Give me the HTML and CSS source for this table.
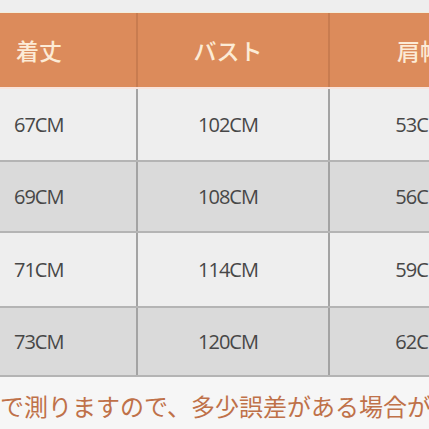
FILE: index.html
```html
<!DOCTYPE html>
<html lang="ja">
<head>
<meta charset="utf-8">
<title>サイズ表</title>
<link rel="stylesheet" href="styles.css">
</head>
<body>
<div class="page">
  <div class="topband"></div>
  <div class="table">
    <div class="row head">
      <div class="cell first">着丈</div>
      <div class="cell">バスト</div>
      <div class="cell">肩幅</div>
    </div>
    <div class="row light r1">
      <div class="cell first">67CM</div>
      <div class="cell">102CM</div>
      <div class="cell">53CM</div>
    </div>
    <div class="row dark r2">
      <div class="cell first">69CM</div>
      <div class="cell">108CM</div>
      <div class="cell">56CM</div>
    </div>
    <div class="row light r3">
      <div class="cell first">71CM</div>
      <div class="cell">114CM</div>
      <div class="cell">59CM</div>
    </div>
    <div class="row dark r4">
      <div class="cell first">73CM</div>
      <div class="cell">120CM</div>
      <div class="cell">62CM</div>
    </div>
  </div>
  <p class="note">で測りますので、多少誤差がある場合があります。</p>
</div>
</body>
</html>
```
FILE: styles.css
```css
html, body {
  margin: 0;
  padding: 0;
  width: 429px;
  height: 429px;
  overflow: hidden;
  background: #f6f6f6;
}
.page {
  width: 429px;
  height: 429px;
  overflow: hidden;
  display: flex;
  flex-direction: column;
}
.topband {
  height: 12px;
  background: #eeeeee;
  border-bottom: 1px solid #f3eedc;
  flex: none;
}
.table {
  width: 520px;
  flex: none;
}
.row {
  display: grid;
  grid-template-columns: 136px 192px 192px;
}
.cell {
  display: flex;
  align-items: center;
  justify-content: center;
  padding-right: 10px;
  border-left: 2px solid #a3a3a3;
  font-family: "Open Sans", "Noto Sans CJK JP", sans-serif;
  font-size: 20px;
  letter-spacing: -1px;
  color: #474747;
}
.cell.first {
  justify-content: flex-start;
  padding-left: 14px;
  padding-right: 0;
  border-left: none;
}
.head {
  height: 74px;
  background: #dc8b5b;
  border-bottom: 2px solid #f9e4dc;
}
.head .cell {
  font-family: "Noto Sans CJK JP", sans-serif;
  font-size: 23px;
  font-weight: 500;
  letter-spacing: 0;
  color: #fcebd6;
  border-left-color: #c87c50;
}
.head .cell.first {
  padding-left: 16px;
}
.light { background: #eeeeee; }
.dark { background: #dadada; }
.r1 { height: 71px; border-bottom: 2px solid #b4b4b4; }
.r2 { height: 69px; border-bottom: 2px solid #b4b4b4; }
.r3 { height: 73px; border-bottom: 2px solid #b4b4b4; }
.r4 { height: 67px; border-bottom: 2px solid #b4b4b4; }
.note {
  margin: 0;
  padding: 14px 0 0 0;
  font-family: "Noto Sans CJK JP", sans-serif;
  font-size: 24px;
  line-height: 30px;
  color: #bf7149;
  white-space: nowrap;
}
```
